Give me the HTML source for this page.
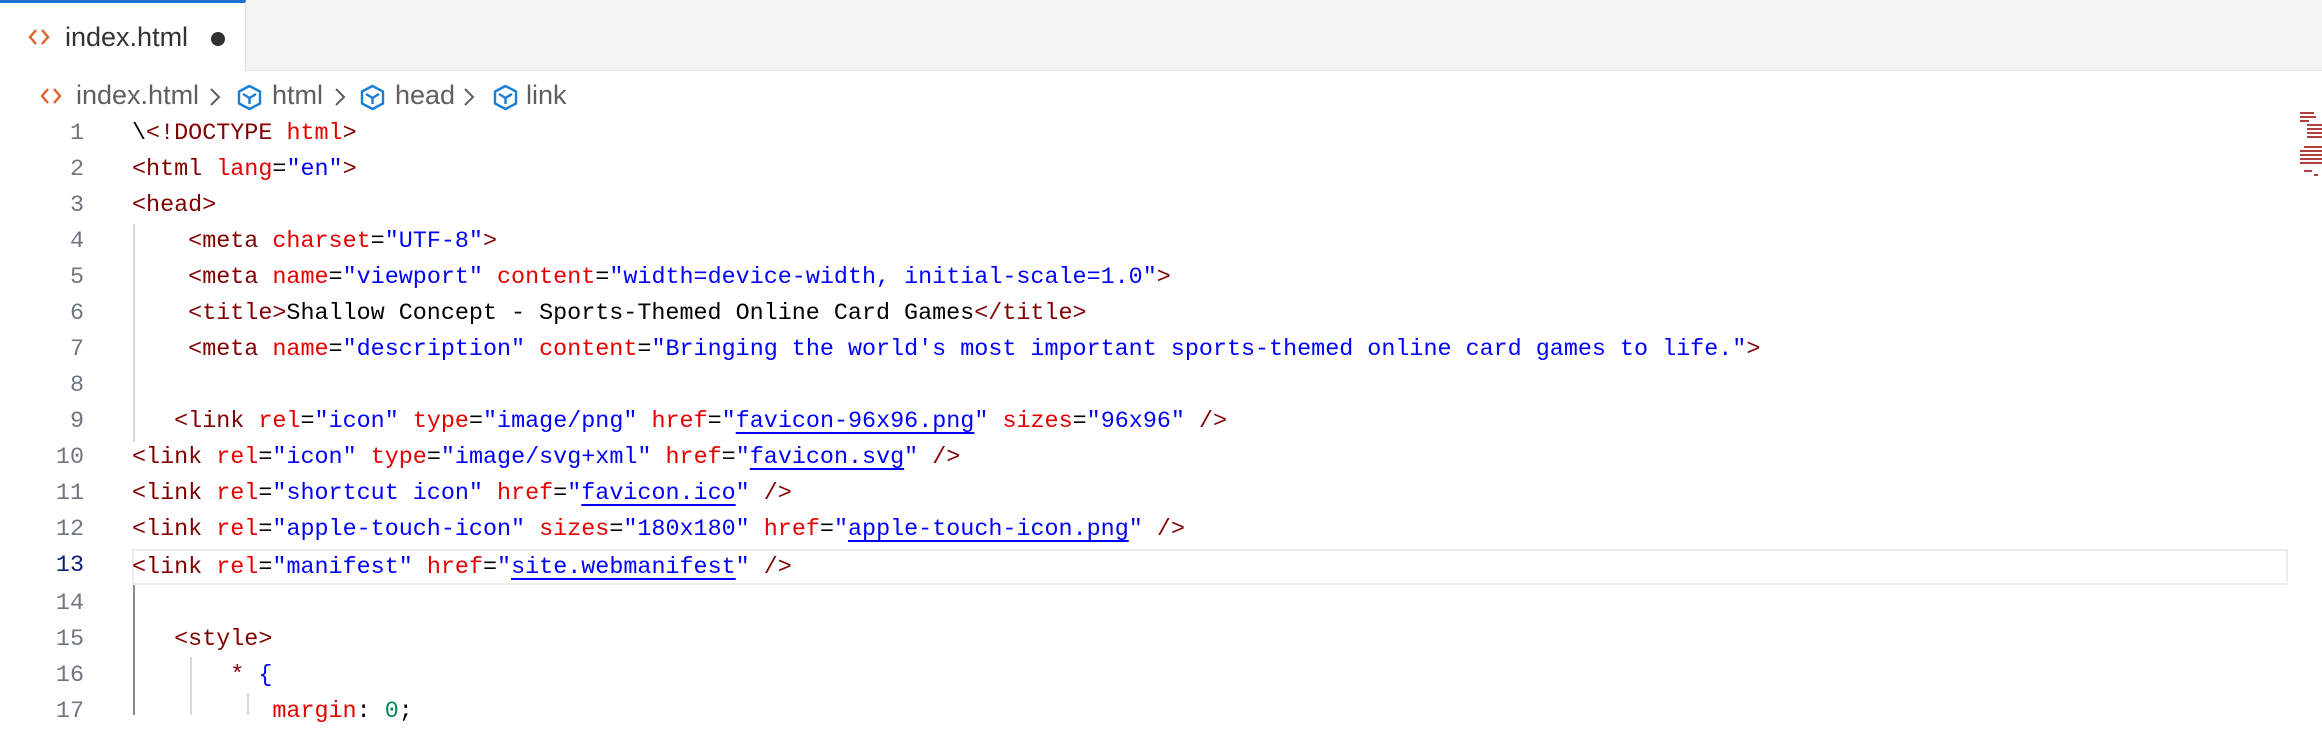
<!DOCTYPE html>
<html><head><style>
*{margin:0;padding:0;box-sizing:border-box}
body{width:2322px;height:714px;background:#fff;position:relative;overflow:hidden;font-family:"Liberation Sans",sans-serif}
.tabbar{position:absolute;left:0;top:0;width:2322px;height:71px;background:#f3f3f3;border-bottom:1px solid #e8e8e8}
.tab{position:absolute;left:0;top:0;width:246px;height:71px;background:#fff;border-top:3px solid #1f6fd0;border-right:1px solid #e0e0e0}
.tab .t{position:absolute;left:65px;top:19px;font-size:27px;color:#333}
.dot{position:absolute;left:211px;top:29px;width:14px;height:14px;border-radius:50%;background:#333}
.a{position:absolute}
.bc{position:absolute;top:80px;font-size:27px;color:#5f5f5f}
.code{position:absolute;left:0;top:116px;font-family:"Liberation Mono",monospace;font-size:23.4px}
.ln{position:absolute;width:84px;text-align:right;color:#6e7681;font-size:23.4px;height:36px;line-height:36px}
.l{position:absolute;left:132px;white-space:pre;height:36px;line-height:36px;color:#000}
.g{color:#800000}.r{color:#e50000}.v{color:#0000ff}.u{color:#0000ff;text-decoration:underline;text-underline-offset:5px}.n{color:#098658}
.hl{position:absolute;left:132px;top:549px;width:2156px;height:36px;border:2px solid #ececec}
.ig{position:absolute;width:2px;background:#d8d8d8}
</style></head><body>
<div class="tabbar"><div class="tab">
<svg class="a" style="left:28px;top:24px" width="22" height="20" viewBox="0 0 22 20"><path d="M8 3 L2 10 L8 17 M14 3 L20 10 L14 17" stroke="#e0622a" stroke-width="2.4" fill="none"/></svg>
<span class="t">index.html</span><div class="dot"></div></div></div>

<svg class="a" style="left:40px;top:86px" width="22" height="20" viewBox="0 0 22 20"><path d="M8 3 L2 10 L8 17 M14 3 L20 10 L14 17" stroke="#e0622a" stroke-width="2.4" fill="none"/></svg>
<span class="bc" style="left:76px">index.html</span>
<span class="bc" style="left:272px">html</span>
<span class="bc" style="left:395px">head</span>
<span class="bc" style="left:526px">link</span>
<svg class="a" style="left:208px;top:86px" width="14" height="22" viewBox="0 0 14 22"><path d="M3 3 L11 11 L3 19" stroke="#5f5f5f" stroke-width="2" fill="none"/></svg>
<svg class="a" style="left:333px;top:86px" width="14" height="22" viewBox="0 0 14 22"><path d="M3 3 L11 11 L3 19" stroke="#5f5f5f" stroke-width="2" fill="none"/></svg>
<svg class="a" style="left:462px;top:86px" width="14" height="22" viewBox="0 0 14 22"><path d="M3 3 L11 11 L3 19" stroke="#5f5f5f" stroke-width="2" fill="none"/></svg>
<svg class="a" style="left:236px;top:84px" width="27" height="27" viewBox="0 0 27 27"><path d="M13.5 2 L24 7.5 V19.5 L13.5 25 L3 19.5 V7.5 Z M7 10 L13.5 14 L20 10 M13.5 14 V20" stroke="#1a7fd4" stroke-width="2.4" fill="none" stroke-linejoin="round"/></svg>
<svg class="a" style="left:359px;top:84px" width="27" height="27" viewBox="0 0 27 27"><path d="M13.5 2 L24 7.5 V19.5 L13.5 25 L3 19.5 V7.5 Z M7 10 L13.5 14 L20 10 M13.5 14 V20" stroke="#1a7fd4" stroke-width="2.4" fill="none" stroke-linejoin="round"/></svg>
<svg class="a" style="left:492px;top:84px" width="27" height="27" viewBox="0 0 27 27"><path d="M13.5 2 L24 7.5 V19.5 L13.5 25 L3 19.5 V7.5 Z M7 10 L13.5 14 L20 10 M13.5 14 V20" stroke="#1a7fd4" stroke-width="2.4" fill="none" stroke-linejoin="round"/></svg>

<div class="hl"></div>
<div class="ig" style="left:133px;top:224px;height:218px"></div>
<div class="ig" style="left:133px;top:585px;height:130px;background:#8a8a8a"></div>
<div class="ig" style="left:190px;top:657px;height:58px"></div>
<div class="ig" style="left:247px;top:693px;height:22px"></div>

<div class="code">
<div class="ln" style="top:0">1</div><div class="l" style="top:0">\<span class="g">&lt;!DOCTYPE</span> <span class="r">html</span><span class="g">&gt;</span></div>
<div class="ln" style="top:36px">2</div><div class="l" style="top:36px"><span class="g">&lt;html</span> <span class="r">lang</span>=<span class="v">"en"</span><span class="g">&gt;</span></div>
<div class="ln" style="top:72px">3</div><div class="l" style="top:72px"><span class="g">&lt;head&gt;</span></div>
<div class="ln" style="top:108px">4</div><div class="l" style="top:108px">    <span class="g">&lt;meta</span> <span class="r">charset</span>=<span class="v">"UTF-8"</span><span class="g">&gt;</span></div>
<div class="ln" style="top:144px">5</div><div class="l" style="top:144px">    <span class="g">&lt;meta</span> <span class="r">name</span>=<span class="v">"viewport"</span> <span class="r">content</span>=<span class="v">"width=device-width, initial-scale=1.0"</span><span class="g">&gt;</span></div>
<div class="ln" style="top:180px">6</div><div class="l" style="top:180px">    <span class="g">&lt;title&gt;</span>Shallow Concept - Sports-Themed Online Card Games<span class="g">&lt;/title&gt;</span></div>
<div class="ln" style="top:216px">7</div><div class="l" style="top:216px">    <span class="g">&lt;meta</span> <span class="r">name</span>=<span class="v">"description"</span> <span class="r">content</span>=<span class="v">"Bringing the world's most important sports-themed online card games to life."</span><span class="g">&gt;</span></div>
<div class="ln" style="top:252px">8</div>
<div class="ln" style="top:288px">9</div><div class="l" style="top:288px">   <span class="g">&lt;link</span> <span class="r">rel</span>=<span class="v">"icon"</span> <span class="r">type</span>=<span class="v">"image/png"</span> <span class="r">href</span>=<span class="v">"</span><span class="u">favicon-96x96.png</span><span class="v">"</span> <span class="r">sizes</span>=<span class="v">"96x96"</span> <span class="g">/&gt;</span></div>
<div class="ln" style="top:324px">10</div><div class="l" style="top:324px"><span class="g">&lt;link</span> <span class="r">rel</span>=<span class="v">"icon"</span> <span class="r">type</span>=<span class="v">"image/svg+xml"</span> <span class="r">href</span>=<span class="v">"</span><span class="u">favicon.svg</span><span class="v">"</span> <span class="g">/&gt;</span></div>
<div class="ln" style="top:360px">11</div><div class="l" style="top:360px"><span class="g">&lt;link</span> <span class="r">rel</span>=<span class="v">"shortcut icon"</span> <span class="r">href</span>=<span class="v">"</span><span class="u">favicon.ico</span><span class="v">"</span> <span class="g">/&gt;</span></div>
<div class="ln" style="top:396px">12</div><div class="l" style="top:396px"><span class="g">&lt;link</span> <span class="r">rel</span>=<span class="v">"apple-touch-icon"</span> <span class="r">sizes</span>=<span class="v">"180x180"</span> <span class="r">href</span>=<span class="v">"</span><span class="u">apple-touch-icon.png</span><span class="v">"</span> <span class="g">/&gt;</span></div>
<div class="ln" style="top:432px;color:#0b216f">13</div><div class="l" style="top:434px"><span class="g">&lt;link</span> <span class="r">rel</span>=<span class="v">"manifest"</span> <span class="r">href</span>=<span class="v">"</span><span class="u">site.webmanifest</span><span class="v">"</span> <span class="g">/&gt;</span></div>
<div class="ln" style="top:470px">14</div>
<div class="ln" style="top:506px">15</div><div class="l" style="top:506px">   <span class="g">&lt;style&gt;</span></div>
<div class="ln" style="top:542px">16</div><div class="l" style="top:542px">       <span class="g">*</span> <span class="v">{</span></div>
<div class="ln" style="top:578px">17</div><div class="l" style="top:578px">          <span class="r">margin</span>: <span class="n">0</span>;</div>
</div>
<svg class="a" style="left:2300px;top:112px" width="22" height="600"><g fill="#b04040"><rect x="0" y="0" width="14" height="2"/><rect x="0" y="4" width="16" height="2"/><rect x="0" y="8" width="9" height="2"/><rect x="7" y="12" width="15" height="2"/><rect x="7" y="16" width="15" height="2"/><rect x="7" y="20" width="15" height="2"/><rect x="7" y="24" width="15" height="2"/><rect x="4" y="34" width="18" height="2"/><rect x="0" y="38" width="22" height="2"/><rect x="0" y="42" width="22" height="2"/><rect x="0" y="46" width="22" height="2"/><rect x="0" y="50" width="22" height="2"/><rect x="4" y="58" width="8" height="2"/><rect x="14" y="62" width="4" height="2"/></g></svg>
</body></html>
